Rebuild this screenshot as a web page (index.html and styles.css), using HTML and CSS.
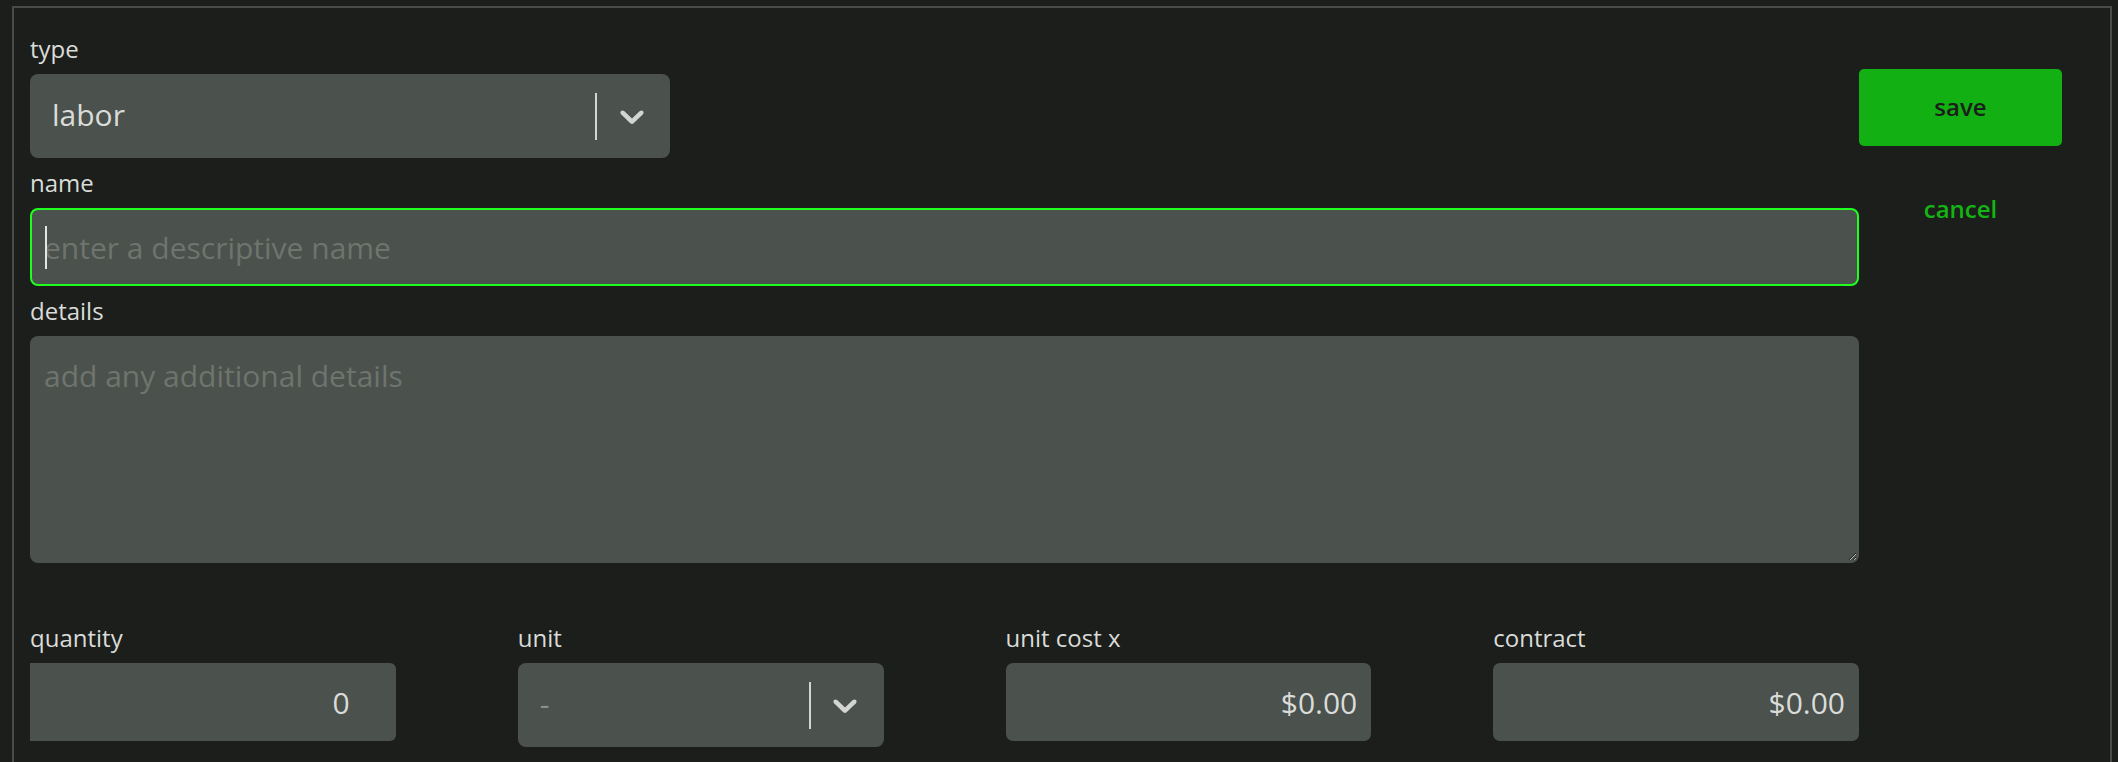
FILE: index.html
```html
<!DOCTYPE html>
<html lang="en">
<head>
    <meta charset="UTF-8">
    <meta name="viewport" content="width=device-width, initial-scale=1.0">
    <title>Line Item</title>
    <link rel="stylesheet" href="styles.css">
</head>
<body>
    <div class="panel">
        <form class="item-form">
            <label class="field-label">type</label>
            <div class="select select-type">
                <span class="select-value">labor</span>
                <span class="select-sep"></span>
                <span class="select-arrow">
                    <svg viewBox="0 0 20 20" width="40" height="40"><path d="M4.516 7.548c0.436-0.446 1.043-0.481 1.576 0l3.908 3.747 3.908-3.747c0.533-0.481 1.141-0.446 1.574 0 0.436 0.445 0.408 1.197 0 1.615-0.406 0.418-4.695 4.502-4.695 4.502-0.217 0.223-0.502 0.335-0.787 0.335s-0.57-0.112-0.789-0.335c0 0-4.287-4.084-4.695-4.502s-0.436-1.17 0-1.615z"/></svg>
                </span>
            </div>

            <label class="field-label">name</label>
            <div class="input-wrap">
                <input class="text-input is-focused" type="text" placeholder="enter a descriptive name">
                <span class="caret"></span>
            </div>

            <label class="field-label">details</label>
            <textarea class="details-input" placeholder="add any additional details"></textarea>

            <div class="cost-row">
                <div class="cost-field">
                    <label class="field-label">quantity</label>
                    <input class="num-input qty-input" type="text" value="0">
                </div>
                <div class="cost-field">
                    <label class="field-label">unit</label>
                    <div class="select">
                        <span class="select-value is-placeholder">-</span>
                        <span class="select-sep"></span>
                        <span class="select-arrow">
                            <svg viewBox="0 0 20 20" width="40" height="40"><path d="M4.516 7.548c0.436-0.446 1.043-0.481 1.576 0l3.908 3.747 3.908-3.747c0.533-0.481 1.141-0.446 1.574 0 0.436 0.445 0.408 1.197 0 1.615-0.406 0.418-4.695 4.502-4.695 4.502-0.217 0.223-0.502 0.335-0.787 0.335s-0.57-0.112-0.789-0.335c0 0-4.287-4.084-4.695-4.502s-0.436-1.17 0-1.615z"/></svg>
                        </span>
                    </div>
                </div>
                <div class="cost-field">
                    <label class="field-label">unit cost x</label>
                    <input class="num-input money-input" type="text" value="$0.00">
                </div>
                <div class="cost-field">
                    <label class="field-label">contract</label>
                    <input class="num-input money-input" type="text" value="$0.00">
                </div>
            </div>
        </form>

        <div class="actions">
            <button class="save-button" type="button">save</button>
            <button class="cancel-button" type="button">cancel</button>
        </div>
    </div>
</body>
</html>
```

FILE: styles.css
```css
* {
    margin: 0;
    padding: 0;
    box-sizing: border-box;
}

body {
    font-family: 'Open Sans', 'Noto Sans', sans-serif;
    background: #1c1e1b;
    color: #d9dcd8;
    height: 100vh;
    overflow: hidden;
}

.panel {
    display: flex;
    margin: 6px 6px 0 12px;
    padding: 23px 48px 0 16px;
    min-height: 100vh;
    border: 2px solid #474d46;
}

.item-form {
    flex: 1;
    display: flex;
    flex-direction: column;
    align-items: flex-start;
}

.field-label {
    display: block;
    font-size: 24px;
    line-height: 36px;
    color: #d9dcd8;
    margin-bottom: 7px;
}

/* react-select look */
.select {
    display: flex;
    align-items: center;
    width: 100%;
    height: 84px;
    padding-left: 22px;
    background: #4b514c;
    border-radius: 8px;
}

.select-type {
    width: 640px;
    margin-bottom: 7px;
}

.select-value {
    flex: 1;
    font-size: 30px;
    line-height: 40px;
    padding-bottom: 2px;
    color: #dadcd9;
}

.select-value.is-placeholder {
    color: #8d918c;
}

.select-sep {
    width: 2px;
    height: 47px;
    background: #d3d5d2;
}

.select-arrow {
    width: 73px;
    display: flex;
    align-items: center;
    justify-content: center;
    padding-right: 4px;
}

.select-arrow svg {
    fill: #d3d5d2;
}

.input-wrap {
    position: relative;
    width: 100%;
    margin-bottom: 7px;
}

.text-input,
.details-input,
.num-input {
    display: block;
    width: 100%;
    font-family: inherit;
    font-size: 30px;
    color: #dadcd9;
    background: #4b514c;
    border: 2px solid transparent;
    outline: none;
}

.text-input {
    height: 78px;
    padding: 0 12px;
    border-radius: 8px;
}

.text-input.is-focused {
    border-color: #1eff1e;
}

.caret {
    position: absolute;
    left: 15px;
    top: 18px;
    width: 2px;
    height: 43px;
    background: #e4e6e3;
}

.text-input::placeholder,
.details-input::placeholder {
    color: #6f746f;
}

.details-input {
    height: 227px;
    padding: 15px 12px;
    line-height: 45px;
    border-radius: 8px;
    margin-bottom: 57px;
}

.cost-row {
    display: grid;
    grid-template-columns: repeat(4, 1fr);
    column-gap: 122px;
    width: 100%;
}

.num-input {
    height: 78px;
    text-align: right;
}

.qty-input {
    padding: 0 44px 0 12px;
    border-radius: 0 6px 6px 0;
}

.money-input {
    padding: 0 12px;
    border-radius: 7px;
}

.actions {
    width: 203px;
    display: flex;
    flex-direction: column;
    align-items: center;
    padding-top: 38px;
}

.save-button {
    width: 100%;
    height: 77px;
    padding-bottom: 2px;
    border: none;
    border-radius: 5px;
    background: #12b012;
    color: #1b1e1b;
    font-family: inherit;
    font-size: 24px;
    font-weight: 600;
    cursor: pointer;
}

.cancel-button {
    margin-top: 45px;
    border: none;
    background: none;
    color: #13b413;
    font-family: inherit;
    font-size: 24px;
    font-weight: 600;
    line-height: 36px;
    cursor: pointer;
}
```
